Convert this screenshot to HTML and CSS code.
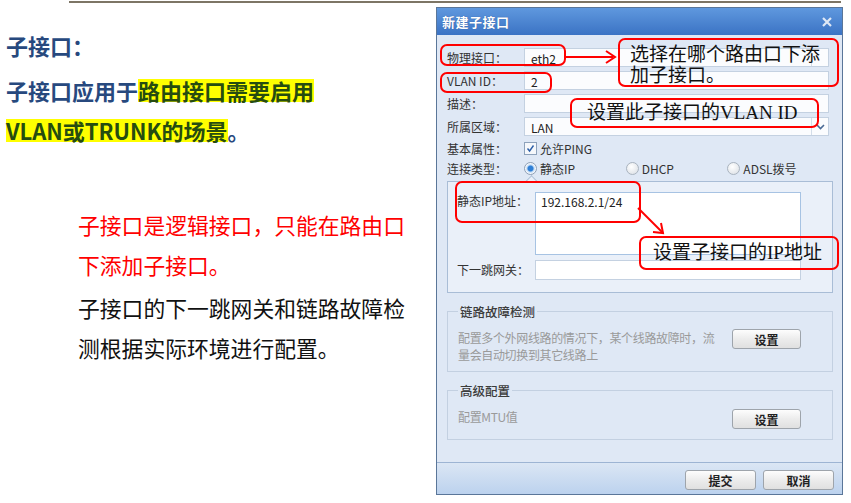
FILE: index.html
```html
<!DOCTYPE html>
<html lang="zh-CN">
  <head>
    <meta charset="utf-8" />
    <title>子接口</title>
    <link rel="stylesheet" href="styles.css">
  </head>
  <body>
    <div class="rule"></div>
    <div class="slide">
      <div class="notes">
        <p class="heading">子接口：</p>
        <p class="heading lead">子接口应用于<span class="mark">路由接口需要启用</span><br><span class="mark">VLAN或TRUNK的场景</span>。</p>
        <p class="note red">子接口是逻辑接口，只能在路由口<br>下添加子接口。</p>
        <p class="note">子接口的下一跳网关和链路故障检<br>测根据实际环境进行配置。</p>
      </div>

      <div class="dialog">
        <div class="titlebar">
          <span class="title">新建子接口</span>
          <svg class="close" width="10" height="10" viewBox="0 0 10 10"><path d="M1 1 L9 9 M9 1 L1 9" stroke="#dfe8f5" stroke-width="2.2"/></svg>
        </div>

        <div class="dlg-body">
          <div class="form">
            <span class="lbl">物理接口：</span>
            <div class="field select">eth2<span class="drop"></span></div>
            <span class="lbl">VLAN ID：</span>
            <div class="field">2</div>
            <span class="lbl">描述：</span>
            <div class="field"></div>
            <span class="lbl">所属区域：</span>
            <div class="field select">LAN<span class="drop"><svg width="9" height="6" viewBox="0 0 9 6"><path d="M1 1 L4.5 4.5 L8 1" fill="none" stroke="#4a6a95" stroke-width="1.6"/></svg></span></div>
            <span class="lbl">基本属性：</span>
            <div class="opts">
              <span class="check"><span class="box"><svg width="9" height="9" viewBox="0 0 9 9"><path d="M1.5 4.5 L3.6 7 L7.5 1.5" fill="none" stroke="#2d5fa8" stroke-width="1.4"/></svg></span>允许PING</span>
            </div>
            <span class="lbl">连接类型：</span>
            <div class="opts">
              <span class="radio on"><span class="dot"></span>静态IP</span>
              <span class="radio"><span class="dot"></span>DHCP</span>
              <span class="radio"><span class="dot"></span>ADSL拨号</span>
            </div>
          </div>

          <div class="ipbox">
            <div class="iprow">
              <span class="lbl">静态IP地址：</span>
              <div class="area">192.168.2.1/24</div>
            </div>
            <div class="iprow">
              <span class="lbl">下一跳网关：</span>
              <div class="field gw"></div>
            </div>
          </div>

          <div class="group">
            <span class="group-title">链路故障检测</span>
            <div class="group-row">
              <p class="hint">配置多个外网线路的情况下，某个线路故障时，流<br>量会自动切换到其它线路上</p>
              <button class="btn">设置</button>
            </div>
          </div>

          <div class="group second">
            <span class="group-title">高级配置</span>
            <div class="group-row">
              <p class="hint">配置MTU值</p>
              <button class="btn">设置</button>
            </div>
          </div>
        </div>

        <div class="dlg-foot">
          <button class="btn">提交</button>
          <button class="btn">取消</button>
        </div>

        <!-- red annotations drawn over the screenshot -->
        <svg class="arrows" width="407" height="488" viewBox="0 0 407 488">
          <path d="M129 50 H177" stroke="#f00" stroke-width="2" fill="none"/>
          <path d="M170 44 L179 50 L170 56" stroke="#f00" stroke-width="2" fill="none"/>
          <path d="M202 201 L227 226" stroke="#f00" stroke-width="2" fill="none"/>
          <path d="M225 216 L227 226 L217 225" stroke="#f00" stroke-width="2" fill="none"/>
        </svg>
        <div class="ring ring-phy"></div>
        <div class="ring ring-vlan"></div>
        <div class="ring ring-ip"></div>
        <div class="callout call-1">选择在哪个路由口下添<br>加子接口。</div>
        <div class="callout call-2">设置此子接口的VLAN ID</div>
        <div class="callout call-3">设置子接口的IP地址</div>
      </div>
    </div>
  </body>
</html>
```

FILE: styles.css
```css
body {
  margin: 0;
  font-family: "Noto Sans CJK SC", "Noto Sans", sans-serif;
  background: #fff;
}

.rule {
  margin: 1px 0 0 69px;
  width: 772px;
  height: 2px;
  background: #7d7565;
}

.slide {
  display: flex;
}

/* left column of the slide */
.notes {
  width: 436px;
  padding-top: 22px;
}
.notes p {
  margin: 0;
}
.heading {
  padding-left: 6px;
  font-size: 22px;
  font-weight: bold;
  line-height: 40px;
  color: #27497e;
}
.lead {
  margin-top: 5px !important;
}
.mark {
  color: #264c10;
  background: linear-gradient(#ffff00, #ffff00) 0 50% / 100% 23px no-repeat;
}
.note {
  padding-left: 78px;
  font-size: 21.8px;
  line-height: 40px;
  color: #111;
}
.note.red {
  margin-top: 55px !important;
  color: #ff0000;
}
.note.red + .note {
  margin-top: 3px !important;
}

/* dialog */
.dialog {
  position: relative;
  margin-top: 4px;
  width: 405px;
  height: 486px;
  border: 1px solid #5a7699;
  background: #dfe8f5;
  display: flex;
  flex-direction: column;
  font-size: 12px;
  color: #333;
}
.titlebar {
  height: 27px;
  padding: 0 9px 0 5px;
  display: flex;
  align-items: center;
  justify-content: space-between;
  background: linear-gradient(#5f98de, #3b73c4);
  color: #fff;
}
.title {
  font-size: 13px;
  font-weight: bold;
  letter-spacing: 0.5px;
  text-shadow: 0 0 1px #2a5597;
}
.close {
  margin-right: 1px;
}

.dlg-body {
  flex: 1;
  padding: 13px 9px 0 10px;
}
.form {
  display: grid;
  grid-template-columns: 77px 305px;
  grid-template-rows: 19px 19px 19px 19px 16px 16px;
  row-gap: 4px;
  align-items: center;
}
.lbl {
  white-space: nowrap;
  color: #333;
}
.field {
  height: 17px;
  border: 1px solid #c4d1e1;
  background: #fbfcfe;
  padding: 0 6px;
  line-height: 20px;
  font-size: 12px;
  color: #222;
  position: relative;
}
.select {
  padding-right: 24px;
}
.drop {
  position: absolute;
  top: 0;
  right: 0;
  width: 16px;
  height: 17px;
  border-left: 1px solid #d3dde9;
  display: flex;
  align-items: center;
  justify-content: center;
}
.opts {
  display: flex;
  align-items: center;
  height: 16px;
}
.check, .radio {
  display: flex;
  align-items: center;
  gap: 3px;
  color: #333;
}
.box {
  width: 11px;
  height: 11px;
  border: 1px solid #8ea2bb;
  background: #f6f8fb;
  display: flex;
  align-items: center;
  justify-content: center;
}
.radio {
  width: 102px;
}
.dot {
  width: 11px;
  height: 11px;
  border-radius: 50%;
  border: 1px solid #a9b3bf;
  background: radial-gradient(circle at 40% 35%, #fff, #d8dde3);
}
.radio.on .dot {
  border-color: #8d9fb6;
  background: radial-gradient(circle, #2f7fd6 0 2.5px, #bcd8f5 3.5px, #f4f7fb 5px);
}

.ipbox {
  position: relative;
  margin-top: 5px;
  margin-right: 0;
  height: 100px;
  padding: 10px 30px 0 9px;
  border: 1px solid #a9bdd6;
  background: #eaf0f9;
}
/* notch under the selected radio */
.ipbox::before {
  content: "";
  position: absolute;
  top: -5px;
  left: 79px;
  width: 8px;
  height: 8px;
  background: #eaf0f9;
  border-top: 1px solid #a9bdd6;
  border-left: 1px solid #a9bdd6;
  transform: rotate(45deg);
}
.iprow {
  display: grid;
  grid-template-columns: 78px 266px;
  align-items: start;
}
.iprow .lbl {
  line-height: 18px;
}
.iprow + .iprow {
  margin-top: 5px;
  align-items: center;
}
.area {
  height: 61px;
  border: 1px solid #a7c3e3;
  background: #fff;
  padding: 0 5px;
  line-height: 18px;
  color: #222;
}
.gw {
  height: 18px;
  border-color: #c4d1e1;
  background: #fff;
}

.group {
  margin-top: 18px;
  height: 52px;
  padding: 0 31px 7px 10px;
  border: 1px solid #c3d0e1;
}
.group.second {
  height: 39px;
  padding-bottom: 9px;
}
.group-title {
  display: inline-block;
  margin-top: -9px;
  height: 18px;
  line-height: 18px;
  padding: 0 2px;
  background: #dfe8f5;
  color: #3c3c3c;
  font-weight: 500;
  font-size: 12.5px;
  vertical-align: top;
}
.group-row {
  display: flex;
  justify-content: space-between;
  align-items: flex-start;
  margin-top: 0;
}
.second .group-row {
  margin-top: 1px;
}
.hint {
  margin: 0;
  font-size: 12px;
  line-height: 17px;
  letter-spacing: -0.35px;
  color: #9a9a9a;
}
.second .hint {
  margin-top: -1px;
}
.btn {
  width: 69px;
  height: 20px;
  padding: 0;
  border: 1px solid #9ea4ab;
  border-radius: 3px;
  background: linear-gradient(#fdfdfd, #ececec 50%, #e0e0e0);
  font-family: inherit;
  font-size: 12px;
  font-weight: bold;
  color: #222;
}

.dlg-foot {
  height: 32px;
  border-top: 1px solid #9db4d3;
  background: linear-gradient(#dbe6f4, #bcd2ee);
  display: flex;
  justify-content: flex-end;
  gap: 7px;
  padding: 7px 8px 0 0;
  box-sizing: border-box;
}
.dlg-foot .btn {
  width: 71px;
}

/* annotation overlay */
.arrows {
  position: absolute;
  left: -1px;
  top: -1px;
  pointer-events: none;
}
.ring, .callout {
  position: absolute;
  border: 2px solid #f00;
  border-radius: 7px;
  box-sizing: border-box;
}
.ring-phy { left: 3px; top: 36px; width: 126px; height: 22px; }
.ring-vlan { left: 3px; top: 64px; width: 112px; height: 21px; }
.ring-ip { left: 18px; top: 173px; width: 186px; height: 42px; }
.callout {
  font-size: 19px;
  color: #111;
  white-space: nowrap;
}
.call-1 {
  left: 181px;
  top: 30px;
  width: 221px;
  height: 49px;
  padding: 2px 0 0 10px;
  line-height: 21px;
}
.call-2 {
  left: 133px;
  top: 90px;
  width: 249px;
  height: 30px;
  padding-left: 15px;
  line-height: 25px;
  font-family: "Liberation Serif", "Noto Sans CJK SC", serif;
}
.call-3 {
  left: 202px;
  top: 228px;
  width: 200px;
  height: 34px;
  padding-left: 12px;
  line-height: 29px;
  font-family: "Liberation Serif", "Noto Sans CJK SC", serif;
}
```
